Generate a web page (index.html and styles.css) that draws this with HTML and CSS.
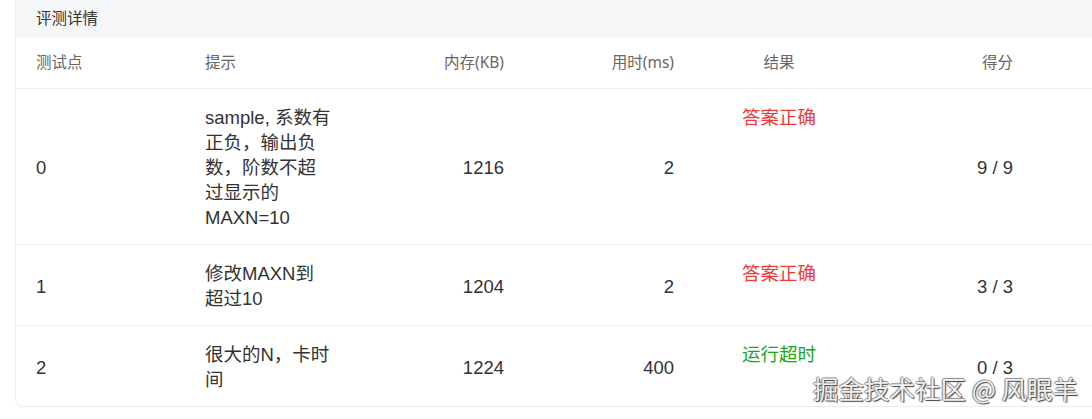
FILE: index.html
```html
<!DOCTYPE html>
<html lang="zh-CN">
<head>
<meta charset="utf-8">
<title>评测详情</title>
<link rel="stylesheet" href="styles.css">
</head>
<body>
<section class="card">
  <div class="card-title">评测详情</div>
  <div class="table">
    <div class="row head">
      <div class="cell left">测试点</div>
      <div class="cell left">提示</div>
      <div class="cell right">内存(KB)</div>
      <div class="cell right">用时(ms)</div>
      <div class="cell center">结果</div>
      <div class="cell right">得分</div>
    </div>
    <div class="row">
      <div class="cell left">0</div>
      <div class="cell left hint">sample, 系数有正负，输出负数，阶数不超过显示的MAXN=10</div>
      <div class="cell right">1216</div>
      <div class="cell right">2</div>
      <div class="cell center top ok">答案正确</div>
      <div class="cell right">9 / 9</div>
    </div>
    <div class="row">
      <div class="cell left">1</div>
      <div class="cell left hint">修改MAXN到超过10</div>
      <div class="cell right">1204</div>
      <div class="cell right">2</div>
      <div class="cell center top ok">答案正确</div>
      <div class="cell right">3 / 3</div>
    </div>
    <div class="row">
      <div class="cell left">2</div>
      <div class="cell left hint">很大的N，卡时间</div>
      <div class="cell right">1224</div>
      <div class="cell right">400</div>
      <div class="cell center top tle">运行超时</div>
      <div class="cell right">0 / 3</div>
    </div>
  </div>
</section>
<div class="watermark">掘金技术社区 @ 风眠羊</div>
</body>
</html>
```

FILE: styles.css
```css
html, body {
  margin: 0;
  padding: 0;
  background: #ffffff;
  overflow: hidden;
  width: 1092px;
  height: 419px;
}

body {
  font-family: "Liberation Sans", "Noto Sans CJK SC", sans-serif;
  color: #333333;
}

.card {
  margin-left: 15px;
  width: 1110px;
  border: 1px solid #ececec;
  border-top: none;
  border-radius: 0 0 8px 8px;
  overflow: hidden;
  background: #ffffff;
}

.card-title {
  height: 37px;
  line-height: 37px;
  padding-left: 20px;
  background: #f5f6f7;
  font-family: "Noto Sans", "Noto Sans CJK SC", sans-serif;
  font-size: 15.5px;
  color: #333333;
}

.row {
  display: grid;
  grid-template-columns: 169px 168px 171px 170px 170px 169px;
  border-bottom: 1px solid #efefef;
}

.row:last-child {
  border-bottom: none;
}

.cell {
  padding: 16px 20px 14px;
  font-size: 18.5px;
  line-height: 25px;
  color: #333333;
  align-self: center;
}

.head .cell {
  padding: 0 20px;
  height: 51px;
  line-height: 51px;
  font-family: "Noto Sans", "Noto Sans CJK SC", sans-serif;
  font-size: 15.5px;
  color: #666666;
}

.left { text-align: left; }
.right { text-align: right; }
.center { text-align: center; }

.cell.top { align-self: start; }

.cell.hint {
  padding-right: 21.5px;
}

.cell.ok { color: #ef3b36; }
.cell.tle { color: #1aa61a; }

.watermark {
  position: absolute;
  right: 14px;
  bottom: 18px;
  font-family: "Noto Sans CJK SC", "Noto Sans", sans-serif;
  font-size: 25.5px;
  line-height: 26px;
  color: #f0f0f0;
  text-shadow: 1px 1px 1px #3f3f3f, -1px 0 1px #8a8a8a, 0 -1px 1px #8a8a8a;
}
```
